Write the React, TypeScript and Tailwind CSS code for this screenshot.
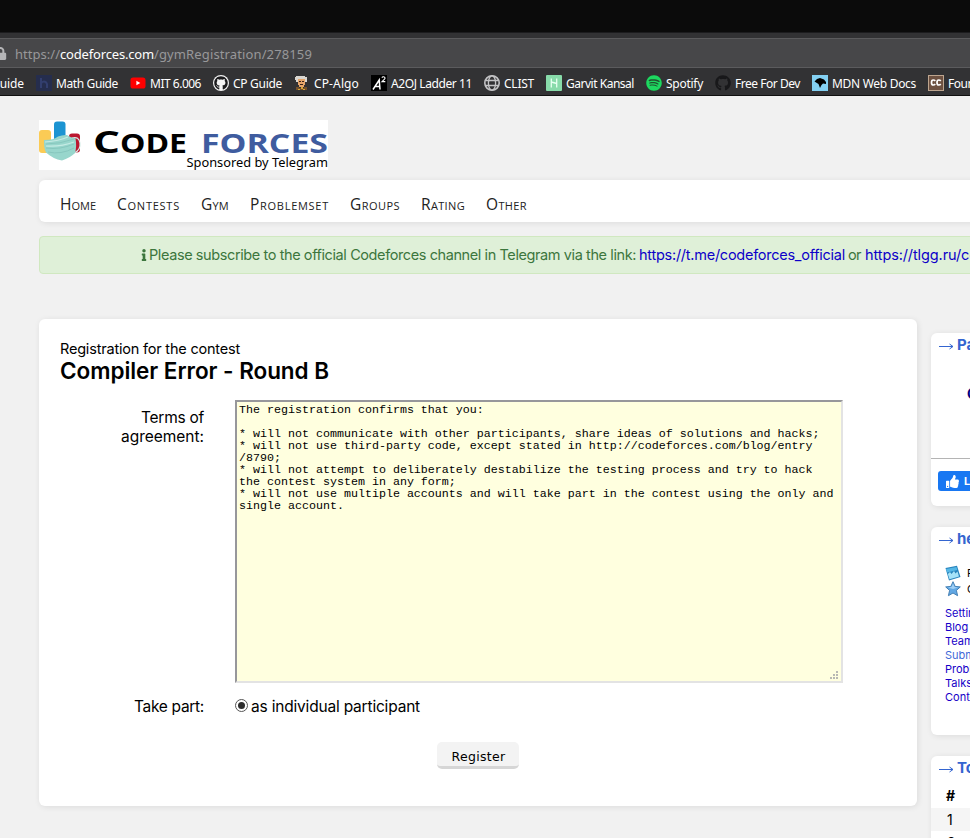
import React, { useLayoutEffect, useRef, useState } from "react";
import { FaThumbsUp, FaLock, FaInfo, FaGithub, FaSpotify } from "react-icons/fa";

const LF = "font-['Inter','Open_Sans',sans-serif]";

/** Single line of text whose tracking is adjusted so that it fills `w` pixels. */
function Fit({ w, children, className = "" }: { w: number; children: string; className?: string }) {
  const ref = useRef<HTMLSpanElement>(null);
  const [ls, setLs] = useState(0);
  useLayoutEffect(() => {
    const el = ref.current;
    if (el) setLs((w - el.getBoundingClientRect().width) / children.length);
  }, []);
  return (
    <span ref={ref} className={`inline-block shrink-0 whitespace-nowrap ${className}`} style={{ letterSpacing: ls }}>
      {children}
    </span>
  );
}

const HIcon = () => (
  <svg width="16" height="16" viewBox="0 0 16 16">
    <rect width="16" height="16" fill="#252d4d" />
    <path d="M5 3v10M5 8.5Q6 6.5 8 6.5T11 9v4" fill="none" stroke="#323e6e" strokeWidth="2" />
  </svg>
);
const YouTube = () => (
  <svg width="16" height="16" viewBox="0 0 16 16">
    <rect x="0.5" y="2.6" width="15" height="11" rx="2.6" fill="#f00" />
    <path d="M6.4 5.8v4.5L10.3 8z" fill="#fff" />
  </svg>
);
const GitWhite = () => (
  <div className="flex h-4 w-4 items-center justify-center rounded-full bg-[#f4f4f4]">
    <FaGithub size={14} color="#1b1b1d" />
  </div>
);
const Professor = () => (
  <svg width="16" height="16" viewBox="0 0 16 16">
    <path d="M2 1h9v1h2v5h-2V4H4v3H2V5H1V2h1z" fill="#d9d6d0" />
    <path d="M4 4h7v6h-1v2H5v-2H4z" fill="#e6a56b" />
    <path d="M5 6h2v1H5zM8 6h2v1H8zM6 9h3v1H6z" fill="#38231a" />
    <path d="M2 12h3v1h5v-1h3v3H2z" fill="#75502a" />
    <path d="M7 12h2v2H7zM4 14h2v1H4zM9 14h2v1H9z" fill="#d6a638" />
  </svg>
);
const ASquared = () => (
  <svg width="16" height="16" viewBox="0 0 16 16">
    <rect width="16" height="16" fill="#000" />
    <path d="M2 14.500 8.200 5 9 14.500M4.500 11.400h4.500" fill="none" stroke="#fff" strokeWidth="1.500" />
    <path d="M10.800 2.600q1.500-1.600 2.700-.4t-.5 2.400l-2 2h3.300" fill="none" stroke="#fff" strokeWidth="1.100" />
  </svg>
);
const Globe = () => (
  <svg width="16" height="16" viewBox="0 0 16 16" fill="none" stroke="#c3c3c5" strokeWidth="1.300">
    <circle cx="8" cy="8" r="7.200" strokeWidth="1.600" />
    <ellipse cx="8" cy="8" rx="3.600" ry="7.200" />
    <path d="M1.500 5.500h13M1.500 10.500h13" />
  </svg>
);
const HGreen = () => (
  <svg width="16" height="16" viewBox="0 0 16 16">
    <rect width="16" height="16" rx="1" fill="#88dbaa" />
    <path d="M5.300 3.500v9M10.700 3.500v9M5.300 7l5.400 1.500" stroke="#e5fff0" strokeWidth="1.300" fill="none" />
  </svg>
);
const Spotify = () => (
  <div className="flex h-4 w-4 items-center justify-center rounded-full bg-[#20502f]">
    <FaSpotify size={16} color="#1ed760" />
  </div>
);
const GitDark = () => <FaGithub size={16} color="#18181a" />;
const Mdn = () => (
  <svg width="16" height="16" viewBox="0 0 16 16">
    <rect width="16" height="16" fill="#83d0f2" />
    <path d="M2.500 6.500 5 4l3-1 4 1.500 2 2.500v2l-3-.5-1.500 1.500L8 13l-1.500-4z" fill="#000" />
  </svg>
);
const CodeChef = () => (
  <svg width="16" height="16" viewBox="0 0 16 16">
    <rect x=".5" y=".5" width="15" height="15" fill="#6d5141" stroke="#bda58f" />
    <path d="M7.300 5.800Q6.500 5 5.200 5 3.500 5 3.500 7.500T5.200 10q1.300 0 2.100-.8M12.800 5.800Q12 5 10.700 5 9 5 9 7.500t1.700 2.500q1.300 0 2.100-.8" fill="none" stroke="#fff" strokeWidth="1.700" />
  </svg>
);

const bookmarks: [React.ComponentType, string, number][] = [
  [HIcon, "Math Guide", 62],
  [YouTube, "MIT 6.006", 51],
  [GitWhite, "CP Guide", 49],
  [Professor, "CP-Algo", 45],
  [ASquared, "A2OJ Ladder 11", 81],
  [Globe, "CLIST", 30],
  [HGreen, "Garvit Kansal", 68],
  [Spotify, "Spotify", 37],
  [GitDark, "Free For Dev", 65],
  [Mdn, "MDN Web Docs", 84],
  [CodeChef, "Foundation", 60],
];

function Browser() {
  return (
    <div className="h-24 overflow-hidden bg-[#323234] font-['Noto_Sans',sans-serif] text-white">
      <div className="h-[33px] border-b border-[#1c1c1e] bg-[#0b0b0b]" />
      <div className="mt-[5px] flex h-[30px] items-center border-y border-[#5b5b5d] bg-[#474749]">
        <div className="-ml-[6px] w-[21px] shrink-0">
          <FaLock size={13} color="#b5b5b7" />
        </div>
        <div className="flex pt-0.5 text-[13px] leading-5 text-[#98989a]">
          <Fit w={45}>https://</Fit>
          <Fit w={94} className="text-white">codeforces.com</Fit>
          <Fit w={158}>/gymRegistration/278159</Fit>
        </div>
      </div>
      <div className="flex h-[27px] items-center gap-3 pt-[3px] text-xs leading-4">
        <Fit w={33} className="-ml-[9px] pt-0.5">Guide</Fit>
        {bookmarks.map(([Icon, label, w]) => (
          <div key={label} className="flex shrink-0 items-center gap-1">
            <div className="h-4 w-4 shrink-0"><Icon /></div>
            <Fit w={w} className="pt-0.5">{label}</Fit>
          </div>
        ))}
      </div>
      <div className="h-px bg-[#101010]" />
    </div>
  );
}

function Logo() {
  return (
    <svg width="289" height="50" viewBox="0 0 289 50" className="block bg-white">
      <rect x="0" y="10" width="12" height="23" rx="3" fill="#fbcb55" />
      <rect x="15" y="1.500" width="11.500" height="28" rx="3" fill="#1c94d2" />
      <rect x="30" y="13.500" width="11" height="19" rx="3" fill="#bb1730" />
      <path d="M33 18q7-2 8 5t-6 10" fill="none" stroke="#d8eee9" strokeWidth="1.200" />
      <path d="M5 20q10 0 14-3.500 5-2 9-1.500 4 3 8.500 3.500 1.500 8-.5 14.500-5 5-13 7.500Q14 39 7 32.500 4.500 27 5 20z" fill="#98d6cc" />
      <path d="M7 24q14 0 28-5M7 28q14 2 28-4M9 32q13 3 26-4" fill="none" stroke="#7fc0b7" strokeWidth=".7" />
      <path d="M6 22q14-1 23-5M7 26q15 1 28-4" fill="none" stroke="#c5ebe4" strokeWidth="1.200" />
      <g fontFamily="'Open Sans', sans-serif" fontWeight="700">
        <text x="54" y="32.500" fontSize="31" textLength="27" lengthAdjust="spacingAndGlyphs">C</text>
        <text x="81" y="32.500" fontSize="26" textLength="67" lengthAdjust="spacingAndGlyphs">ODE</text>
        <text x="162" y="32.500" fontSize="26" fill="#3f5c9f" textLength="127" lengthAdjust="spacingAndGlyphs">FORCES</text>
      </g>
      <text x="147.500" y="46.500" fontSize="13" fontFamily="'Noto Sans', sans-serif" textLength="141.500" lengthAdjust="spacingAndGlyphs">Sponsored by Telegram</text>
    </svg>
  );
}

const menu: [string, number][] = [
  ["Home", 36], ["Contests", 63], ["Gym", 28], ["Problemset", 79], ["Groups", 50], ["Rating", 44], ["Other", 41],
];

const card = "bg-white shadow-[1px_1px_6px_rgba(0,0,0,0.09)]";

const terms = [
  "The registration confirms that you:",
  "",
  "* will not communicate with other participants, share ideas of solutions and hacks;",
  "* will not use third-party code, except stated in http://codeforces.com/blog/entry",
  "/8790;",
  "* will not attempt to deliberately destabilize the testing process and try to hack",
  "the contest system in any form;",
  "* will not use multiple accounts and will take part in the contest using the only and",
  "single account.",
];

function SideTitle({ children }: { children: string }) {
  return (
    <div className="flex h-6 items-start pl-2 pt-px text-[15px] font-bold leading-[22px] text-[#3465d0]">
      <svg width="15" height="8" viewBox="0 0 15 8" className="mr-[3px] mt-[8px] shrink-0" fill="none" stroke="#3465d0">
        <path d="M0 4.500h14M10.500 2l3.500 2.500L10.500 7" />
      </svg>
      <span className="whitespace-nowrap">{children}</span>
    </div>
  );
}

function RegistrationForm() {
  return (
    <div className={`h-[487px] w-[878px] shrink-0 rounded-md pl-[21px] pt-5 ${card}`}>
      <div className="h-5 text-[14.500px] leading-5"><Fit w={180}>Registration for the contest</Fit></div>
      <div className="h-[41px] text-[22.500px] font-semibold leading-6"><Fit w={269}>Compiler Error - Round B</Fit></div>
      <div className="flex">
        <div className="flex w-[144px] flex-col items-end pt-2 text-[15.500px] leading-[19px]">
          <Fit w={63}>Terms of</Fit>
          <Fit w={83}>agreement:</Fit>
        </div>
        <div className="relative ml-[31px] h-[283px] w-[608px] border-2 border-b-[#e3e3e3] border-l-[#97979b] border-r-[#e3e3e3] border-t-[#97979b] bg-[#ffffdf] px-0.5 pt-0.5 font-['Liberation_Mono',monospace] text-[11.670px] leading-3">
          {terms.map((line, i) => (
            <div key={i} className="h-3 whitespace-pre">{line}</div>
          ))}
          <svg width="9" height="9" viewBox="0 0 9 9" className="absolute bottom-px right-[2px]" fill="#b9b9b4">
            <path d="M6 0h2v2H6zM3 3h2v2H3zM6 3h2v2H6zM0 6h2v2H0zM3 6h2v2H3zM6 6h2v2H6z" />
          </svg>
        </div>
      </div>
      <div className="mt-3 flex h-6 items-center text-[15.500px] leading-6">
        <div className="flex w-[144px] justify-end"><Fit w={70}>Take part:</Fit></div>
        <div className="-mt-[3px] ml-[31px] mr-[3px] flex h-[13px] w-[13px] items-center justify-center rounded-full border border-[#555] bg-white">
          <div className="h-[7px] w-[7px] rounded-full bg-[#2d2d2d]" />
        </div>
        <Fit w={169}>as individual participant</Fit>
      </div>
      <button className="ml-[377px] mt-[23px] block h-[27px] w-[82px] rounded-[5px] border-b-[3px] border-[#d6d6d6] bg-[#f3f3f3] pl-px pt-[3px] text-center font-['DejaVu_Sans',sans-serif] text-[12.500px] leading-6">
        <Fit w={54}>Register</Fit>
      </button>
    </div>
  );
}

const links = ["Settings", "Blog", "Teams", "Submissions", "Problemsetting", "Talks", "Contests"];

function Sidebar() {
  return (
    <div className="ml-3.5 mt-3.5 flex w-[240px] shrink-0 flex-col gap-[21px]">
      <div className={`h-[173px] rounded-md ${card}`}>
        <SideTitle>Pay attention</SideTitle>
        <div className="h-[102px] border-b border-[#b4b4b4] pl-9 pt-[27px] text-sm font-bold leading-5 text-[#000080]">Codeforces Round</div>
        <div className="ml-[7px] mt-3 flex h-5 w-[70px] items-center gap-[5px] rounded-[3px] bg-[#1877f2] pl-2 text-[11px] font-bold text-white">
          <FaThumbsUp size={13} />Like
        </div>
      </div>
      <div className={`h-[208px] rounded-md ${card}`}>
        <SideTitle>hello</SideTitle>
        <div className="mt-[14px] flex h-4 items-center gap-[6px] pl-3.5 text-[11px]">
          <svg width="16" height="16" viewBox="0 0 16 16" className="shrink-0">
            <path d="M.5 3 12 .8 15.500 12 4 15.500z" fill="#2884bd" />
            <path d="M1 4l10.500-2 .8 3L2.200 7.500z" fill="#55b7e6" />
            <path d="M2.800 9 5 7l1.500 2L9 6l1.500 2.500 2-2 1.500 5-9.500 2.800z" fill="#a5e2f8" />
          </svg>
          Friends
        </div>
        <div className="flex h-4 items-center gap-[6px] pl-3.5 text-[11px]">
          <svg width="16" height="16" viewBox="0 0 16 16" className="shrink-0">
            <path d="M8 .7l2.100 4.700 5.200.5-3.900 3.500 1.200 5.300L8 12l-4.600 2.700 1.200-5.300L.7 5.900l5.200-.5z" fill="#62a8e4" stroke="#4580b4" />
            <path d="M8 2.500 9.500 6 13 6.500 8 8 3 6.500 6.500 6z" fill="#a0d0f6" />
          </svg>
          Contribution
        </div>
        <div className="mt-[9px] pl-3.5 text-[11px] leading-[14px] text-[#1600c8]">
          {links.map((l) => (
            <div key={l} className={l === "Submissions" ? "text-[#4169d8]" : ""}>{l}</div>
          ))}
        </div>
      </div>
      <div className={`h-[173px] rounded-md ${card}`}>
        <SideTitle>Top rated</SideTitle>
        <div className="h-7 pl-[15px] pt-1 text-[14px] font-bold leading-6">#</div>
        <div className="h-[23px] bg-[#f5f5f5] pl-4 text-[14px] leading-6">1</div>
        <div className="h-[23px] pl-4 text-[14px] leading-6">2</div>
      </div>
    </div>
  );
}

export default function App() {
  return (
    <div className={`h-[838px] w-[970px] overflow-hidden bg-[#f1f1f1] text-black ${LF}`}>
      <Browser />
      <div className="pl-[39px] pt-6">
        <Logo />
        <div className={`mt-2.5 flex h-[42px] w-[1160px] gap-[21px] rounded-md pl-[21px] pt-3.5 font-['Open_Sans',sans-serif] text-[15.500px] leading-5 text-[#222] [font-variant:small-caps] ${card}`}>
          {menu.map(([m, w]) => <Fit key={m} w={w}>{m}</Fit>)}
        </div>
        <div className="mt-3.5 flex h-[38px] w-[1160px] items-center rounded border border-[#d0e8c0] bg-[#dff0d8] pl-[98px] text-[14.500px] leading-5 text-[#3c763d]">
          <FaInfo size={12} className="-mr-px shrink-0" />
          <Fit w={487}>Please subscribe to the official Codeforces channel in Telegram via the link:</Fit>
          <Fit w={206} className="ml-[3px] text-[#0d00c8]">https://t.me/codeforces_official</Fit>
          <Fit w={13} className="ml-[3px]">or</Fit>
          <Fit w={224} className="ml-1 text-[#0d00c8]">https://tlgg.ru/codeforces_official</Fit>
        </div>
        <div className="mt-[45px] flex">
          <RegistrationForm />
          <Sidebar />
        </div>
      </div>
    </div>
  );
}
